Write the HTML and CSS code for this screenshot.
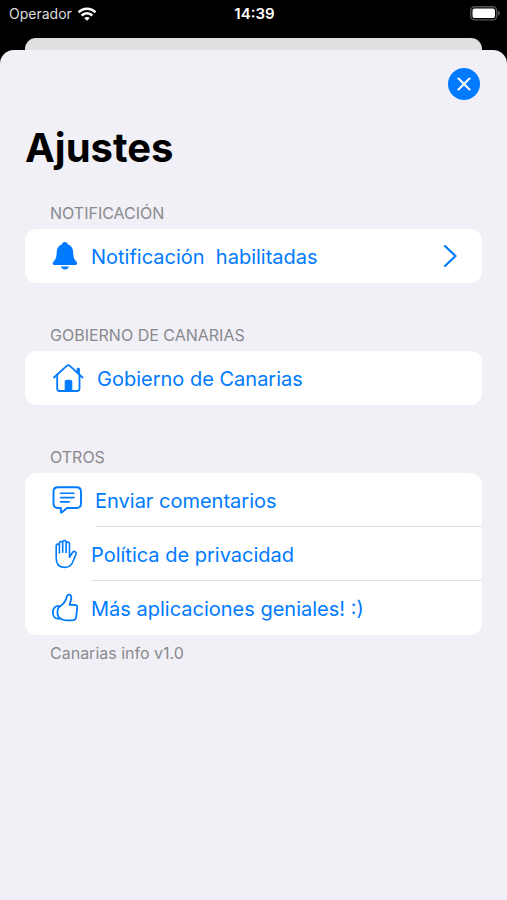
FILE: index.html
```html
<!DOCTYPE html>
<html lang="es">
<head>
<meta charset="utf-8">
<meta name="viewport" content="width=device-width, initial-scale=1">
<title>Ajustes</title>
<link rel="stylesheet" href="styles.css">
</head>
<body>
<header class="status">
  <div class="carrier">
    <span>Operador</span>
    <svg width="20" height="16" viewBox="0 0 20 16" fill="none" stroke="#fff" stroke-width="2.6" aria-hidden="true">
      <path d="M1.6 6.4C6.3 1.6 13.700 1.600 18.400 6.400"/>
      <path d="M4.700 9.500C7.700 6.500 12.300 6.500 15.300 9.500"/>
      <path d="M10 14.800L7.200 12C8.800 10.500 11.200 10.500 12.800 12Z" fill="#fff" stroke="none"/>
    </svg>
  </div>
  <time class="clock">14:39</time>
  <svg class="battery" width="30" height="15" viewBox="0 0 30 15" aria-hidden="true">
    <rect x="0.700" y="0.700" width="26" height="13.200" rx="4" fill="none" stroke="#555" stroke-width="1.400"/>
    <rect x="2.500" y="2.500" width="22.500" height="9.600" rx="2.200" fill="#fff"/>
    <path d="M28 4.800Q30 5.500 30 7.300T28 9.800Z" fill="#555"/>
  </svg>
</header>
<div class="behind"></div>
<main class="sheet">
  <div class="toolbar">
    <button class="close" type="button" aria-label="Cerrar">
      <svg width="32" height="32" viewBox="0 0 32 32" fill="none" stroke="#fff" stroke-width="2" stroke-linecap="round" aria-hidden="true"><path d="M10.500 10.500L21.500 21.500M21.500 10.500L10.500 21.500"/></svg>
    </button>
  </div>
  <h1>Ajustes</h1>

  <section>
    <h2>NOTIFICACIÓN</h2>
    <div class="card">
      <a class="row" href="#notificacion">
        <svg width="26" height="30" viewBox="0 0 26 30" fill="currentColor" aria-hidden="true">
          <path d="M12.900 1C14.600 1 15.700 2.100 15.900 3.500C19.500 4.500 21 7.600 21.200 11.500C21.400 16.300 22 18 24.300 20.600C25.800 22.300 25.300 23.900 23.600 23.900H2.300C.6 23.900.1 22.300 1.600 20.600C3.900 18 4.500 16.300 4.700 11.500C4.900 7.600 6.400 4.500 9.900 3.500C10.100 2.100 11.200 1 12.900 1Z"/>
          <path d="M9 25.400H16.900C16.500 27.300 15 28.400 12.950 28.400S9.400 27.300 9 25.400Z"/>
        </svg>
        <span class="text spaced">Notificación  habilitadas</span>
        <svg class="chevron" width="16" height="26" viewBox="0 0 16 26" fill="none" stroke="currentColor" stroke-width="2.200" stroke-linecap="round" stroke-linejoin="round" aria-hidden="true"><path d="M3 3L13.500 13L3 23"/></svg>
      </a>
    </div>
  </section>

  <section>
    <h2>GOBIERNO DE CANARIAS</h2>
    <div class="card">
      <a class="row" href="#gobierno">
        <svg width="32" height="30" viewBox="0 0 32 30" fill="none" stroke="currentColor" stroke-width="1.800" stroke-linecap="round" stroke-linejoin="round" aria-hidden="true">
          <path d="M2 14.500L15 2.700Q16.300 1.600 17.600 2.700L30.500 14.500"/>
          <path d="M5.200 12V25.500Q5.200 28 7.700 28H25Q27.500 28 27.500 25.500V12"/>
          <path d="M25.200 9V5.300H27.300V11Z" fill="currentColor" stroke-width="1"/>
          <path d="M13.200 28V18.300Q13.200 17.300 14.200 17.300H18.800Q19.800 17.300 19.800 18.300V28Z" fill="currentColor" stroke-width="1"/>
        </svg>
        <span class="text">Gobierno de Canarias</span>
      </a>
    </div>
  </section>

  <section>
    <h2>OTROS</h2>
    <div class="card">
      <a class="row" href="#comentarios">
        <svg width="30" height="30" viewBox="0 0 30 30" fill="none" stroke="currentColor" stroke-width="1.900" stroke-linecap="round" stroke-linejoin="round" aria-hidden="true">
          <path d="M6 2.200H24.500Q29 2.200 29 6.700V18.500Q29 23 24.500 23H15L9.700 27.500Q8.900 28 8.900 27V23H6Q1.500 23 1.500 18.500V6.700Q1.500 2.200 6 2.200Z"/>
          <path d="M8.500 8.300H22M8.500 12.600H22M8.500 16.900H17.200" stroke-width="1.600"/>
        </svg>
        <span class="text">Enviar comentarios</span>
      </a>
      <a class="row" href="#privacidad">
        <svg width="26" height="30" viewBox="0 0 26 30" fill="none" stroke="currentColor" stroke-width="1.600" stroke-linecap="round" stroke-linejoin="round" aria-hidden="true">
          <path d="M4.200 19V6.700Q4.200 5.100 5.800 5.100T7.400 6.700V14V4Q7.400 2.500 9 2.500T10.700 4V13.200V3Q10.700 1.500 12.400 1.500T14.100 3V13.500V4.700Q14.100 3.100 15.800 3.100T17.500 4.700V18.300L20.700 13.300Q21.700 11.900 23.200 12.700Q24.700 13.500 24 15.200L20.500 23.500Q18.400 28.400 12.500 28.400Q4.200 28.400 4.200 19Z"/>
        </svg>
        <span class="text">Política de privacidad</span>
      </a>
      <a class="row" href="#aplicaciones">
        <svg width="26" height="30" viewBox="0 0 26 30" fill="none" stroke="currentColor" stroke-width="1.800" stroke-linecap="round" stroke-linejoin="round" aria-hidden="true">
          <path d="M8 13.200C11.500 11 13.600 8 14.600 4.400L15.100 2.900Q15.900 1.200 17.600 1.700Q19.600 2.400 19.300 5.200C19 7.700 18.100 9.500 17.600 11.900H22.600Q25.500 12 25.200 14.800L24.200 23.800Q23.600 27.300 20 27.400H15C12.300 27.400 10.500 26.800 8.500 25.700C5.900 24.200 5.200 21.500 5.500 18.500C5.700 16 6.500 14 8 13.200Z"/>
          <path d="M8 13.200H5.800C2.600 13.200.9 16 .9 19.500S2.800 25.700 5.800 25.700H8.500"/>
        </svg>
        <span class="text">Más aplicaciones geniales! :)</span>
      </a>
    </div>
    <p class="version">Canarias info v1.0</p>
  </section>
</main>
</body>
</html>
```
FILE: styles.css
```css
* { box-sizing: border-box; }

body {
  margin: 0;
  min-height: 100vh;
  display: flex;
  flex-direction: column;
  background: #000;
  font-family: Inter, "Liberation Sans", sans-serif;
}

.status {
  display: grid;
  grid-template-columns: 1fr auto 1fr;
  align-items: center;
  height: 27px;
  padding: 0 7px 0 9px;
  color: #fff;
  font-size: 15px;
}

.carrier {
  display: flex;
  align-items: center;
  gap: 3px;
  color: #ddd;
  font-size: 14px;
}

.carrier svg { margin-left: 2px; }

.clock { font-weight: 600; }

.battery { justify-self: end; }

.behind {
  height: 12px;
  margin: 11px 25px 0;
  border-radius: 11px 11px 0 0;
  background: #e0e0e0;
}

.sheet {
  flex: 1;
  padding: 18px 25px 24px;
  border-radius: 14px 14px 0 0;
  background: #f1f0f6;
}

.toolbar {
  display: flex;
  justify-content: flex-end;
  padding-right: 2px;
}

.close {
  width: 32px;
  height: 32px;
  padding: 0;
  border: 0;
  border-radius: 50%;
  background: #007aff;
}

.close svg { display: block; }

h1 {
  margin: 24px 0 31px;
  font-size: 40px;
  line-height: 48px;
  font-weight: 700;
}

section + section { margin-top: 42px; }

h2 {
  margin: 0 25px 6px;
  color: #8a8a8e;
  font-size: 16px;
  line-height: 20px;
  font-weight: 400;
}

.card {
  overflow: hidden;
  border-radius: 12px;
  background: #fff;
}

.row {
  display: flex;
  align-items: center;
  gap: 13px;
  height: 54px;
  padding-left: 27px;
  color: #007aff;
  font-size: 20px;
  text-decoration: none;
}

.row svg { flex: none; }

.text {
  flex: 1;
  padding-top: 3px;
  line-height: 50px;
  border-bottom: 1px solid #e2e2e5;
}

.row:last-child .text { border-color: transparent; }

.spaced { white-space: pre; }

.row .chevron { margin-right: 24px; }

.version {
  margin: 8px 25px 0;
  color: #8a8a8e;
  font-size: 16px;
  line-height: 20px;
}
```
